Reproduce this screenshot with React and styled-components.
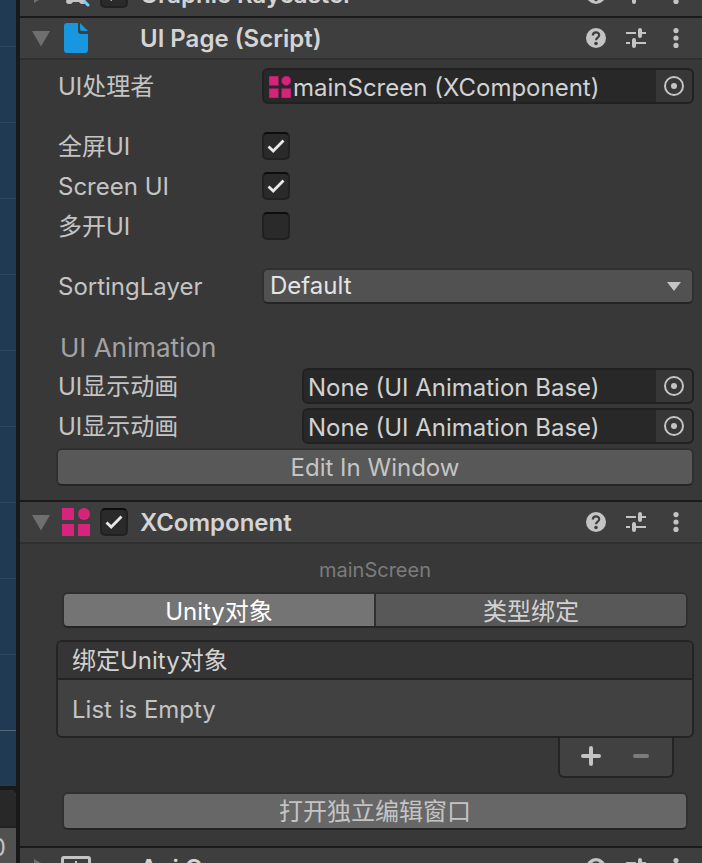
import React, { useState } from "react";
import styled, { createGlobalStyle, css } from "styled-components";

const GlobalStyle = createGlobalStyle`
  *, *::before, *::after { box-sizing: border-box; }
  body { margin: 0; background: #191919; }
  body, button, input, select {
    font-family: Inter, "Noto Sans CJK SC", sans-serif;
    font-size: 24px;
    line-height: 32px;
    color: #c4c4c4;
  }
`;

const Window = styled.div`
  display: flex;
  height: 100vh;
  overflow: hidden;
  background: #191919;
`;

const SidePane = styled.div`
  flex: 0 0 16px;
  display: flex;
  flex-direction: column;
  gap: 4px;
  overflow: hidden;
`;

const Scene = styled.div`
  flex: 1;
  min-height: 0;
  overflow: hidden;
  background: #213a53;
`;

const SceneCell = styled.div`
  height: ${(p) => (p.$first ? 47 : 76)}px;
  border-bottom: 1px solid ${(p) => (p.$axis ? "#546777" : "#2f475d")};
`;

const Dock = styled.div`
  flex: 0 0 73px;
  display: flex;
  flex-direction: column;
  overflow: hidden;
  background: #515151;
  border-top-right-radius: 6px;
`;

const DockTab = styled.div`
  flex: 0 0 38px;
  background: #282828;
  border-bottom: 2px solid #232323;
`;

const DockValue = styled.div`
  display: flex;
  justify-content: flex-end;
  padding: 4px 10px 0 0;
`;

const Inspector = styled.main`
  flex: 1;
  min-width: 0;
  margin: -28px 0 0 4px;
  background: #383838;
`;

const Header = styled.header`
  display: flex;
  align-items: center;
  height: 44px;
  padding: 0 16px 0 8px;
  background: #3e3e3e;
  border-top: 2px solid #1a1a1a;
  border-bottom: 2px solid ${(p) => (p.$open ? "#303030" : "#3e3e3e")};
`;

const IconButton = styled.button`
  display: flex;
  align-items: center;
  justify-content: center;
  width: ${(p) => p.$width || 40}px;
  height: 28px;
  padding: 0;
  border: 0;
  background: none;
`;

const HeaderIcon = styled.span`
  display: flex;
  align-items: center;
  justify-content: center;
  width: 32px;
  height: 32px;
  margin-left: 6px;
`;

const ToggleSlot = styled.span`
  display: flex;
  width: 28px;
  height: 28px;
  margin: 0 12px 0 8px;
`;

const Title = styled.h2`
  flex: 1;
  margin: 0;
  padding-top: 2px;
  font-size: 24px;
  font-weight: 600;
  line-height: 32px;
  color: #d4d4d4;
  white-space: nowrap;
`;

const Tools = styled.div`
  display: flex;
  margin-right: -10px;
`;

const Tick = styled.input.attrs({ type: "checkbox" })`
  appearance: none;
  width: 28px;
  height: 28px;
  margin: 0;
  border: 2px solid #212121;
  border-top-color: #0d0d0d;
  border-radius: 5px;
  background: #2a2a2a center / 24px 24px no-repeat;
  &:checked {
    background-image: url("data:image/svg+xml,%3Csvg xmlns='http://www.w3.org/2000/svg' viewBox='0 0 24 24'%3E%3Cpath d='M4.5 12.5L9.2 17L19.5 6.500' fill='none' stroke='%23e8e8e8' stroke-width='2.8'/%3E%3C/svg%3E");
  }
`;

const Body = styled.section`
  display: flex;
  flex-direction: column;
  padding: 8px 8px ${(p) => p.$bottom}px 36px;
`;

const Group = styled.div`
  display: flex;
  flex-direction: column;
  gap: 4px;
  margin-bottom: ${(p) => (p.$last ? 0 : 24)}px;
`;

const Row = styled.div`
  display: flex;
  align-items: center;
  height: 36px;
`;

const Label = styled.label`
  flex: 0 0 ${(p) => p.$width || 206}px;
  padding: 2px 0 0 2px;
  white-space: nowrap;
`;

const GroupTitle = styled.h3`
  margin: 0;
  padding: 4px 0 0 4px;
  height: 36px;
  font-size: 26px;
  font-weight: 400;
  line-height: 32px;
  color: #a2a2a2;
`;

const ObjectBox = styled.div`
  flex: 1;
  min-width: 0;
  display: flex;
  align-items: center;
  height: 36px;
  border: 2px solid #212121;
  border-radius: 6px;
  background: #282828;
  overflow: hidden;
  svg { flex: none; }
`;

const ObjectIcon = styled.span`
  display: flex;
  padding: 2px 0 0 5px;
`;

const ObjectInput = styled.input`
  flex: 1;
  min-width: 0;
  height: 32px;
  padding: 3px 0 0 ${(p) => (p.$withIcon ? 2 : 4)}px;
  border: 0;
  outline: 0;
  background: none;
  color: #d2d2d2;
`;

const PickButton = styled(IconButton)`
  height: 32px;
  background: #373737;
`;

const SelectBox = styled.div`
  position: relative;
  flex: 1;
  min-width: 0;
  display: flex;
  svg {
    position: absolute;
    right: 13px;
    top: 14px;
    pointer-events: none;
  }
`;

const raised = css`
  border: 2px solid #303030;
  border-bottom-color: #242424;
  border-radius: 6px;
`;

const Select = styled.select`
  ${raised}
  appearance: none;
  width: 100%;
  height: 36px;
  padding: 0 40px 0 6px;
  line-height: 32px;
  background: #515151;
  color: #e4e4e4;
`;

const WideButton = styled.button`
  ${raised}
  height: 38px;
  padding: 2px 0 0;
  margin: 0 ${(p) => (p.$inset ? 6 : 0)}px;
  background: ${(p) => (p.$lit ? "#676767" : "#585858")};
`;

const Caption = styled.p`
  margin: 2px 0 6px;
  font-size: 20px;
  line-height: 32px;
  text-align: center;
  color: #7c7c7c;
`;

const Tabs = styled.div`
  ${raised}
  display: flex;
  height: 36px;
  margin: 0 6px 12px;
  overflow: hidden;
`;

const Tab = styled.button`
  flex: 1;
  height: 32px;
  padding: 2px 0 0;
  border: 0;
  background: ${(p) => (p.$active ? "#747474" : "#585858")};
  color: ${(p) => (p.$active ? "#ffffff" : "#d2d2d2")};
  &:not(:last-child) { border-right: 2px solid #303030; }
`;

const List = styled.div`
  border: 2px solid #242424;
  border-radius: 6px;
  background: #414141;
  overflow: hidden;
`;

const ListTitle = styled.div`
  height: 38px;
  padding: 1px 14px;
  line-height: 36px;
  border-bottom: 2px solid #242424;
  background: #353535;
  color: #d2d2d2;
`;

const ListEmpty = styled.div`
  height: 56px;
  padding: 2px 14px 0;
  line-height: 56px;
`;

const ListFooter = styled.div`
  align-self: flex-end;
  display: flex;
  justify-content: center;
  gap: 10px;
  width: 116px;
  height: 40px;
  padding-top: 4px;
  margin: 0 20px 14px 0;
  border: 2px solid #242424;
  border-top: 0;
  border-radius: 0 0 6px 6px;
  background: #414141;
`;

const Foldout = ({ open }) => (
  <svg width="26" height="28" viewBox="0 0 26 28">
    <path d={open ? "M4 7H22L13 22.500Z" : "M6 5V23L21 14Z"} fill="#6f6f6f" />
  </svg>
);

const HelpIcon = () => (
  <svg width="20" height="20" viewBox="0 0 20 20">
    <circle cx="10" cy="10" r="10" fill="#c4c4c4" />
    <path d="M6.800 7.600C6.800 3.300 13.200 3.300 13.200 7.300C13.200 9.600 10 9.600 10 12.300" fill="none" stroke="#3e3e3e" strokeWidth="2.200" />
    <circle cx="10" cy="15.500" r="1.800" fill="#3e3e3e" />
  </svg>
);

const PresetIcon = () => (
  <svg width="20" height="20" viewBox="0 0 20 20" fill="none" stroke="#c4c4c4">
    <path d="M0 5H10M14 5H20M0 15H4M8 15H20" strokeWidth="2" />
    <path d="M14 2V8M8 12V18" strokeWidth="4" strokeLinecap="round" />
  </svg>
);

const MenuIcon = () => (
  <svg width="20" height="20" viewBox="0 0 20 20" fill="#c4c4c4">
    <circle cx="10" cy="2.600" r="2.600" />
    <circle cx="10" cy="10" r="2.600" />
    <circle cx="10" cy="17.400" r="2.600" />
  </svg>
);

const BlocksIcon = ({ size, outline }) => (
  <svg width={size} height={size} viewBox="0 0 28 28" fill="#d6247c" stroke={outline ? "#8c2057" : "none"}>
    <path d="M0 0H12V12H0ZM0 16H12V28H0ZM16 16H28V28H16Z" />
    <circle cx="22" cy="6" r="6" />
  </svg>
);

const FileIcon = () => (
  <svg width="24" height="30" viewBox="0 0 24 30" fill="#1797e0">
    <path d="M3 0H14V8Q14 11 17 11H24V27Q24 30 21 30H3Q0 30 0 27V3Q0 0 3 0Z" />
    <path d="M16 0L24 8H18Q16 8 16 6Z" />
  </svg>
);

const RaycasterIcon = () => (
  <svg width="28" height="28" viewBox="0 0 28 28">
    <path d="M6 4H22V18L24 21Q24 24 21 24H20Q18 24 17 22H11Q10 24 8 24H7Q4 24 4 21L6 18Z" fill="#c4c4c4" />
    <path d="M23 22L26 25" stroke="#6cd0fa" strokeWidth="3" strokeLinecap="round" />
  </svg>
);

const ApiIcon = () => (
  <svg width="30" height="24" viewBox="0 0 30 24" fill="none" stroke="#c4c4c4">
    <rect x="1.500" y="1.500" width="27" height="21" rx="1.500" strokeWidth="3" />
    <path d="M15 5V19M8 12H22" strokeWidth="2" />
  </svg>
);

const TargetIcon = () => (
  <svg width="20" height="20" viewBox="0 0 20 20">
    <circle cx="10" cy="10" r="9" fill="none" stroke="#c4c4c4" strokeWidth="2" />
    <circle cx="10" cy="10" r="3" fill="#c4c4c4" />
  </svg>
);

const ArrowIcon = () => (
  <svg width="14" height="9" viewBox="0 0 14 9">
    <path d="M0 0H14L7 9Z" fill="#c4c4c4" />
  </svg>
);

const PlusIcon = () => (
  <svg width="20" height="20" viewBox="0 0 20 20">
    <path d="M2 10H18M10 2V18" stroke="#c4c4c4" strokeWidth="4" strokeLinecap="round" />
  </svg>
);

const MinusIcon = () => (
  <svg width="20" height="20" viewBox="0 0 20 20">
    <path d="M4 10H16" stroke="#7c7c7c" strokeWidth="4" strokeLinecap="round" />
  </svg>
);

function ComponentHeader({ title, icon, open, toggle }) {
  return (
    <Header $open={open}>
      <IconButton $width={26} aria-label={`Fold ${title}`} aria-expanded={!!open}>
        <Foldout open={open} />
      </IconButton>
      <HeaderIcon>{icon}</HeaderIcon>
      <ToggleSlot>{toggle && <Tick defaultChecked aria-label={`Enable ${title}`} />}</ToggleSlot>
      <Title>{title}</Title>
      <Tools>
        <IconButton aria-label="Help"><HelpIcon /></IconButton>
        <IconButton aria-label="Presets"><PresetIcon /></IconButton>
        <IconButton aria-label="More"><MenuIcon /></IconButton>
      </Tools>
    </Header>
  );
}

function ObjectField({ id, label, labelWidth, value, icon }) {
  return (
    <Row>
      <Label htmlFor={id} $width={labelWidth}>{label}</Label>
      <ObjectBox>
        {icon && <ObjectIcon>{icon}</ObjectIcon>}
        <ObjectInput id={id} value={value} readOnly $withIcon={!!icon} />
        <PickButton $width={36} aria-label={`Pick ${label}`}><TargetIcon /></PickButton>
      </ObjectBox>
    </Row>
  );
}

function ToggleField({ id, label, checked }) {
  return (
    <Row>
      <Label htmlFor={id}>{label}</Label>
      <Tick id={id} defaultChecked={checked} />
    </Row>
  );
}

const sceneCells = Array.from({ length: 10 }, (_, i) => i);

export default function App() {
  const [tab, setTab] = useState(0);
  return (
    <>
      <GlobalStyle />
      <Window>
        <SidePane>
          <Scene>
            {sceneCells.map((i) => (
              <SceneCell key={i} $first={i === 0} $axis={i === 9} />
            ))}
          </Scene>
          <Dock>
            <DockTab />
            <DockValue>0</DockValue>
          </Dock>
        </SidePane>
        <Inspector>
          <ComponentHeader title="Graphic Raycaster" icon={<RaycasterIcon />} toggle />

          <ComponentHeader title="UI Page (Script)" icon={<FileIcon />} open />
          <Body $bottom={14}>
            <Group>
              <ObjectField
                id="handler"
                label="UI处理者"
                value="mainScreen (XComponent)"
                icon={<BlocksIcon size={22} outline />}
              />
            </Group>
            <Group>
              <ToggleField id="fullscreen" label="全屏UI" checked />
              <ToggleField id="screen" label="Screen UI" checked />
              <ToggleField id="multi" label="多开UI" />
            </Group>
            <Group>
              <Row>
                <Label htmlFor="layer">SortingLayer</Label>
                <SelectBox>
                  <Select id="layer" defaultValue="Default">
                    <option>Default</option>
                  </Select>
                  <ArrowIcon />
                </SelectBox>
              </Row>
            </Group>
            <Group $last>
              <GroupTitle>UI Animation</GroupTitle>
              <ObjectField id="show" label="UI显示动画" labelWidth={246} value="None (UI Animation Base)" />
              <ObjectField id="hide" label="UI显示动画" labelWidth={246} value="None (UI Animation Base)" />
              <WideButton>Edit In Window</WideButton>
            </Group>
          </Body>

          <ComponentHeader title="XComponent" icon={<BlocksIcon size={28} />} open toggle />
          <Body $bottom={16}>
            <Caption>mainScreen</Caption>
            <Tabs role="tablist">
              {["Unity对象", "类型绑定"].map((name, i) => (
                <Tab key={name} role="tab" aria-selected={tab === i} $active={tab === i} onClick={() => setTab(i)}>
                  {name}
                </Tab>
              ))}
            </Tabs>
            <List>
              <ListTitle>绑定Unity对象</ListTitle>
              <ListEmpty>List is Empty</ListEmpty>
            </List>
            <ListFooter>
              <IconButton aria-label="Add"><PlusIcon /></IconButton>
              <IconButton aria-label="Remove" disabled><MinusIcon /></IconButton>
            </ListFooter>
            <WideButton $inset $lit>打开独立编辑窗口</WideButton>
          </Body>

          <ComponentHeader title="Api C" icon={<ApiIcon />} />
        </Inspector>
      </Window>
    </>
  );
}
